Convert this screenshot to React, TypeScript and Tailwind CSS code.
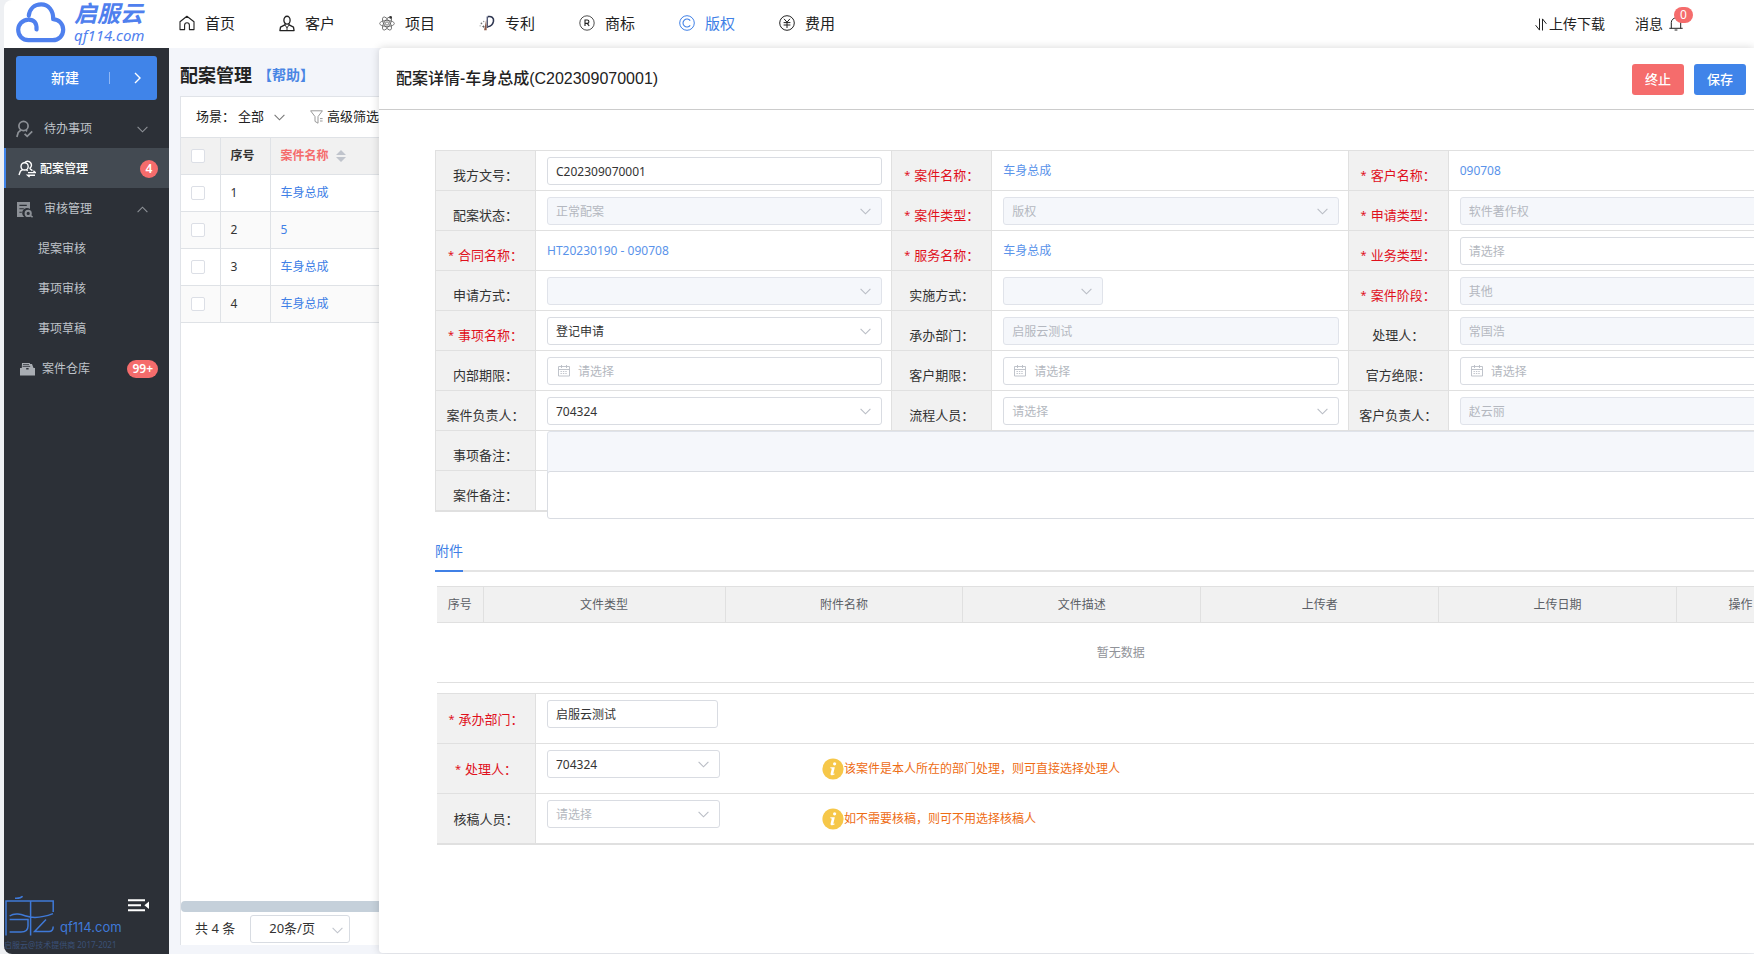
import React, { useId } from "react";

type IconProps = { className?: string };

function Chevron({ className = "" }: IconProps) {
  return (
    <svg className={className} width="11" height="7" viewBox="0 0 11 7" fill="none" stroke="currentColor" strokeWidth="1.1">
      <path d="M0.6 0.8 5.5 5.8 10.4 0.8" />
    </svg>
  );
}

function CalendarIcon({ className = "" }: IconProps) {
  return (
    <svg className={className} width="12" height="12" viewBox="0 0 12 12" fill="none" stroke="currentColor" strokeWidth="0.9">
      <path d="M.5 1.5h11V11H.5ZM0.5 4.5h11M3.5 0v3M8.5 0v3" />
      <path d="M2.5 6.5h7M2.5 8.5h7" strokeDasharray="1.4 1" />
    </svg>
  );
}

function HomeIcon() {
  return (
    <svg width="16" height="16" viewBox="0 0 16 16" fill="none" stroke="currentColor" strokeWidth="1.1" strokeLinejoin="round">
      <path d="M1 6.8 7.9 1.2 15 6.8V14.6H10.4V10.2A2.4 2.4 0 0 0 5.6 10.2V14.6H1Z" />
    </svg>
  );
}

function CustomerIcon() {
  return (
    <svg width="17" height="17" viewBox="0 0 17 17" fill="none" stroke="currentColor" strokeWidth="1.4" strokeLinejoin="round">
      <ellipse cx="8.5" cy="5" rx="3.3" ry="4.2" />
      <path d="M6.6 8.6 6.2 10 1.6 12.4 1 16H16L15.4 12.4 10.8 10 10.4 8.6" />
      <path d="m6.2 10 2.3 3 2.3-3M8.5 12v3.6" strokeWidth="1" />
    </svg>
  );
}

function ProjectIcon() {
  return (
    <svg width="17" height="17" viewBox="0 0 17 17" fill="none" stroke="#555" strokeWidth="0.8">
      <ellipse cx="8.5" cy="8.5" rx="7.8" ry="3.2" />
      <ellipse cx="8.5" cy="8.5" rx="7.8" ry="3.2" transform="rotate(60 8.5 8.5)" />
      <ellipse cx="8.5" cy="8.5" rx="7.8" ry="3.2" transform="rotate(120 8.5 8.5)" />
      <circle cx="8.5" cy="8.5" r="1.7" />
      <circle cx="12.4" cy="2" r="1.4" fill="#333" stroke="none" />
    </svg>
  );
}

function PatentIcon() {
  return (
    <svg width="17" height="17" viewBox="0 0 17 17" fill="none">
      <path d="M9.4 1.2C13.4.4 16 2.6 15.4 6 14.8 9 12.4 11.6 9.6 12" stroke="#2d3550" strokeWidth="1.7" />
      <path d="M8.8 1v12.4" stroke="#4a5270" strokeWidth="1.4" />
      <path d="M5.4 15.6 7.6 4.4 8.2 15.6Z" fill="#8a5a48" />
      <path d="m4.6 10 .5 1.3 1.3.4-1.3.5-.5 1.3-.5-1.3-1.3-.5 1.3-.4Z" fill="#555" />
      <circle cx="2.6" cy="8.4" r=".9" fill="#777" />
      <circle cx="5" cy="6.4" r=".8" fill="#999" />
      <circle cx="1.2" cy="11" r=".7" fill="#999" />
    </svg>
  );
}

function TrademarkIcon() {
  return (
    <svg width="16" height="16" viewBox="0 0 16 16" fill="none" stroke="currentColor">
      <circle cx="8" cy="8" r="7.2" strokeWidth="0.8" />
      <path d="M6 11V5h2.2a1.7 1.7 0 0 1 0 3.4H6M8.2 8.4 10.2 11" strokeWidth="1.1" />
    </svg>
  );
}

function CopyrightIcon() {
  return (
    <svg width="16" height="16" viewBox="0 0 16 16" fill="none" stroke="currentColor" strokeWidth="1">
      <circle cx="8" cy="8" r="7.3" />
      <path d="M11.2 5.6A4 4 0 1 0 11.2 10.4" strokeWidth="1.1" />
    </svg>
  );
}

function FeeIcon() {
  return (
    <svg width="16" height="16" viewBox="0 0 16 16" fill="none" stroke="currentColor" strokeWidth="1">
      <circle cx="8" cy="8" r="7.3" />
      <path d="M5 3.8 8 7.2l3-3.4M8 7.2V13M4.6 7.6h6.8M4.6 10h6.8" />
    </svg>
  );
}

function CloudLogo() {
  return (
    <svg width="50" height="41" viewBox="0 0 50 41" fill="none" stroke="#4f80ee" strokeWidth="4.2" strokeLinecap="round" strokeLinejoin="round">
      <path d="M20.5 27.5C21 20.5 17.6 17.6 12.6 17.6 6.4 17.6 2.2 22.6 2.2 27.8 2.2 33.8 6.6 38.2 12.4 38.2H36.6C42.8 38.2 47.2 33.6 47.2 27.8 47.2 21.8 43 17.6 37.2 17.2 37.4 8.4 32.4 2.4 25.2 2.4 18.4 2.4 13.6 6.8 12.8 13.6" />
    </svg>
  );
}

const navItems = [
  { label: "首页", icon: <HomeIcon /> },
  { label: "客户", icon: <CustomerIcon /> },
  { label: "项目", icon: <ProjectIcon /> },
  { label: "专利", icon: <PatentIcon /> },
  { label: "商标", icon: <TrademarkIcon /> },
  { label: "版权", icon: <CopyrightIcon />, active: true },
  { label: "费用", icon: <FeeIcon /> },
];

function Header() {
  return (
    <header className="flex h-12 shrink-0 items-center rounded-tl-lg bg-white">
      <a href="#" className="flex h-full w-[175px] shrink-0 items-start gap-2 pt-0.5 pl-3 text-[#4f80ee]">
        <CloudLogo />
        <span className="flex flex-col font-['Liberation_Sans','Noto_Sans_CJK_SC',sans-serif] whitespace-nowrap italic">
          <b className="text-[23px] leading-6">启服云</b>
          <span className="font-['Noto_Sans',sans-serif] text-[15px] leading-[18px]">qf114.com</span>
        </span>
      </a>
      <nav className="flex items-center gap-11 pb-0.5">
        {navItems.map((n) => (
          <a
            key={n.label}
            href="#"
            className={`flex w-14 items-center gap-2.5 text-[15px] leading-5 whitespace-nowrap ${n.active ? "text-[#4080e6]" : "text-[#222]"}`}
          >
            <span className="flex w-4 shrink-0 justify-center">{n.icon}</span>
            {n.label}
          </a>
        ))}
      </nav>
      <div className="ml-auto flex items-center gap-[30px] pr-[71px] text-sm leading-5 text-[#222]">
        <button type="button" className="flex items-center gap-0.5">
          <svg width="12" height="13" viewBox="0 0 12 13" fill="none" stroke="currentColor" strokeWidth="1">
            <path d="M4.5 0.5v11.6L0.6 7.2M7.5 12.5V.9l3.9 4.9" />
          </svg>
          上传下载
        </button>
        <button type="button" className="relative flex items-center gap-1.5">
          消息
          <svg width="14" height="14" viewBox="0 0 14 14" fill="none" stroke="currentColor" strokeWidth="1">
            <path d="M.3 11.3h13.4M2.3 11.3V5.6a4.7 4.7 0 0 1 9.4 0v5.7M5.6 13h2.8M7 .9V0" />
          </svg>
          <span className="absolute -top-[7px] -right-2.5 flex h-4 w-[19px] items-center justify-center rounded-full bg-[#f56c6c] text-xs leading-4 text-white">
            0
          </span>
        </button>
      </div>
    </header>
  );
}

function Badge({ children }: { children: React.ReactNode }) {
  return (
    <span className="ml-auto flex h-[18px] min-w-[18px] items-center justify-center rounded-full bg-[#f56c6c] px-[5px] text-xs font-semibold text-white">
      {children}
    </span>
  );
}

function Sidebar() {
  return (
    <aside className="flex w-[165px] shrink-0 flex-col rounded-bl-lg bg-[#2c3037] text-xs text-[#bfc3c9]">
      <button type="button" className="mx-3 mt-2 mb-2 flex h-11 items-center rounded-[3px] bg-[#4084e9] text-sm font-medium text-white">
        <span className="pl-[35px]">新建</span>
        <span className="ml-[30px] h-3 w-px bg-[#8fb7f5]" />
        <svg className="ml-6" width="8" height="12" viewBox="0 0 8 12" fill="none" stroke="currentColor" strokeWidth="1.4">
          <path d="m1 1 5 5-5 5" />
        </svg>
      </button>
      <nav className="flex flex-col">
        <a href="#" className="flex h-10 items-center pt-0.5 pr-[21px] pl-3">
          <svg width="18" height="18" viewBox="0 0 18 18" fill="none" stroke="#8d9197" strokeWidth="1.7">
            <circle cx="7.5" cy="6" r="4.6" />
            <path d="M5 10 2.2 12.4.9 17M10 10.2l1 1.2M8.6 13.8l2.6 2.6 5-5" />
          </svg>
          <span className="ml-2.5">待办事项</span>
          <Chevron className="ml-auto text-[#8d9197]" />
        </a>
        <a href="#" className="flex h-10 items-center border-l-2 border-[#4084e9] bg-[#434a52] pt-0.5 pr-[11px] pl-3 font-medium text-white">
          <svg width="18" height="18" viewBox="0 0 18 18" fill="none" stroke="currentColor" strokeWidth="1.4">
            <circle cx="6.6" cy="6.4" r="3.6" />
            <path d="M4.8 9.4 2.4 11.2 1 15M8.4 9.4l1.2 1.6M6.6 2.6A3.9 3.9 0 1 1 11.4 8.6M12 8.8l2.4 1.8M10 12.6h7.4l-2-1.8M17 15.2H9.6l2 1.8" />
          </svg>
          <span className="ml-1">配案管理</span>
          <Badge>4</Badge>
        </a>
        <a href="#" className="flex h-10 items-center pt-0.5 pr-[21px] pl-3">
          <svg width="18" height="17" viewBox="0 0 18 17" fill="none">
            <path d="M1 1h13v7a4.8 4.8 0 0 0-5.8 8H1Z" fill="#8d9197" />
            <path d="M3.4 4.4h7.4M3.4 7.8h4.4M3.4 11.2h2.4" stroke="#2c3037" strokeWidth="1.1" />
            <circle cx="12.2" cy="12.4" r="2.6" stroke="#8d9197" strokeWidth="2" />
            <path d="m14.2 14.4 2.4 1.8" stroke="#8d9197" strokeWidth="1.6" />
          </svg>
          <span className="ml-2.5">审核管理</span>
          <Chevron className="ml-auto rotate-180 text-[#8d9197]" />
        </a>
        {["提案审核", "事项审核", "事项草稿"].map((t) => (
          <a key={t} href="#" className="flex h-10 items-center pt-0.5 pl-[34px]">
            {t}
          </a>
        ))}
        <a href="#" className="flex h-10 items-center pt-0.5 pr-[11px] pl-4">
          <svg width="15" height="14" viewBox="0 0 15 14" fill="#a9adb3">
            <path d="M2 1h7.6l.6 1H12l1.5 4H1.8Z" />
            <path d="M0 6h6.2v1.6h2.4V6H15v7.4H0Z" />
            <path d="M3 2.6h6M2.6 4.4h7.6" stroke="#2c3037" strokeWidth=".8" />
          </svg>
          <span className="ml-[7px]">案件仓库</span>
          <Badge>99+</Badge>
        </a>
      </nav>
      <div className="mt-auto pb-px">
        <div className="flex items-start">
          <svg className="shrink-0" width="50" height="42" viewBox="0 0 50 42" fill="none" stroke="#3f79d8" strokeWidth="1.5">
            <path d="M11 3.2C14 3.4 17 3 18.6 1.2M2 40.4V6H49.2V17M26.6 6v34.4M5.6 21C11 17.4 17 19.4 22 21 31 24 40 22 49 18.6" />
            <path d="M5.6 24.6H24V31C24 35 21 37 17 37H5.6M42 24.6 30.6 36.6H45C48 36.6 49.2 35 49.2 31.6" />
          </svg>
          <div className="flex flex-1 flex-col">
            <button type="button" aria-label="收起菜单" className="mr-[19px] ml-auto text-white">
              <svg className="block" width="23" height="20" viewBox="0 0 23 20">
                <path d="M1 5.2h17M1 10.2h13M1 15.2h17" stroke="currentColor" strokeWidth="2" />
                <path d="M22 6.4v7.6l-4.6-3.8Z" fill="currentColor" />
              </svg>
            </button>
            <span className="mt-0.5 pl-1.5 font-['Inter','Liberation_Sans',sans-serif] text-[13px] leading-5 text-[#3f79d8]">qf114.com</span>
          </div>
        </div>
        <p className="text-[8px] leading-4 whitespace-nowrap text-[#3b5078]">启服云@技术提供商 2017-2021</p>
      </div>
    </aside>
  );
}

const checkbox =
  "block size-3.5 appearance-none rounded-[2px] border border-[#dcdfe6] bg-white";
const listRows = ["车身总成", "5", "车身总成", "车身总成"];

function CaseList() {
  return (
    <section className="flex w-[210px] shrink-0 flex-col overflow-hidden pt-[15px] pb-[9px] pl-[11px]">
      <h1 className="flex h-6 items-center gap-1.5 text-lg leading-6 font-bold whitespace-nowrap text-[#222]">
        配案管理
        <a href="#" className="text-sm text-[#4a86e4]">【帮助】</a>
      </h1>
      <div className="mt-[9px] flex flex-1 flex-col border-t border-l border-[#e0e3e8] bg-white">
        <div className="flex h-10 items-center pl-[15px] text-[13px] whitespace-nowrap text-[#222]">
          <span>场景：</span>
          <button type="button" className="ml-[3px] flex items-center gap-2.5">
            全部
            <Chevron className="text-[#777]" />
          </button>
          <button type="button" className="ml-[25px] flex items-center gap-1">
            <svg width="13" height="14" viewBox="0 0 13 14" fill="none" stroke="#999" strokeWidth="1">
              <path d="M.6.8h11.8L8 6.6v6.6l-3-1.8V6.6Z" />
              <path d="M10 8.6h2.6M10 11h2.6" />
            </svg>
            高级筛选
          </button>
        </div>
        <table className="w-full table-fixed border-collapse text-left text-xs text-[#333]">
          <thead>
            <tr className="h-[37px] border-y border-[#dfe2e6] bg-[#f1f1f1]">
              <th className="w-[39px] border-r border-[#dfe2e6] pl-2.5">
                <input type="checkbox" aria-label="全选" className={checkbox} />
              </th>
              <th className="w-[50px] border-r border-[#dfe2e6] pl-2.5 font-semibold">序号</th>
              <th className="pl-2.5 font-semibold text-[#f56c6c]">
                <span className="flex items-center gap-[7px]">
                  案件名称
                  <svg width="10" height="12" viewBox="0 0 10 12" fill="#c0c4cc">
                    <path d="M0 5 5 0l5 5ZM0 7l5 5 5-5Z" />
                  </svg>
                </span>
              </th>
            </tr>
          </thead>
          <tbody>
            {listRows.map((name, i) => (
              <tr key={i} className="h-[37px] border-b border-[#dfe2e6] even:bg-[#fafafa]">
                <td className="border-r border-[#dfe2e6] pl-2.5">
                  <input type="checkbox" aria-label={`选择第${i + 1}行`} className={checkbox} />
                </td>
                <td className="border-r border-[#dfe2e6] pl-2.5">{i + 1}</td>
                <td className="pl-2.5">
                  <a href="#" className="text-[#4080e6]">{name}</a>
                </td>
              </tr>
            ))}
          </tbody>
        </table>
        <div className="mt-auto h-[11px] rounded-l-sm bg-[#c5d0da]" />
        <div className="flex h-[33px] items-center pl-3.5 text-[13px] whitespace-nowrap text-[#333]">
          <span>共 4 条</span>
          <div className="relative ml-[15px] w-[100px] shrink-0">
            <select aria-label="每页条数" className="block h-7 w-full appearance-none rounded-[3px] border border-[#d8dce2] bg-white pl-[18px]">
              <option>20条/页</option>
            </select>
            <Chevron className="pointer-events-none absolute top-3 right-[7px] text-[#c0c4cc]" />
          </div>
        </div>
      </div>
    </section>
  );
}

type FieldDef = {
  label: string;
  required?: boolean;
  kind: "input" | "select" | "date" | "link";
  value?: string;
  placeholder?: string;
  disabled?: boolean;
  width?: string;
};

const fieldRows: FieldDef[][] = [
  [
    { label: "我方文号", kind: "input", value: "C202309070001" },
    { label: "案件名称", required: true, kind: "link", value: "车身总成" },
    { label: "客户名称", required: true, kind: "link", value: "090708" },
  ],
  [
    { label: "配案状态", kind: "select", value: "正常配案", disabled: true },
    { label: "案件类型", required: true, kind: "select", value: "版权", disabled: true },
    { label: "申请类型", required: true, kind: "select", value: "软件著作权", disabled: true },
  ],
  [
    { label: "合同名称", required: true, kind: "link", value: "HT20230190 - 090708" },
    { label: "服务名称", required: true, kind: "link", value: "车身总成" },
    { label: "业务类型", required: true, kind: "select", placeholder: "请选择" },
  ],
  [
    { label: "申请方式", kind: "select", value: "", disabled: true },
    { label: "实施方式", kind: "select", value: "", disabled: true, width: "w-[100px]" },
    { label: "案件阶段", required: true, kind: "select", value: "其他", disabled: true },
  ],
  [
    { label: "事项名称", required: true, kind: "select", value: "登记申请" },
    { label: "承办部门", kind: "input", value: "启服云测试", disabled: true },
    { label: "处理人", kind: "input", value: "常国浩", disabled: true },
  ],
  [
    { label: "内部期限", kind: "date", placeholder: "请选择" },
    { label: "客户期限", kind: "date", placeholder: "请选择" },
    { label: "官方绝限", kind: "date", placeholder: "请选择" },
  ],
  [
    { label: "案件负责人", kind: "select", value: "704324" },
    { label: "流程人员", kind: "select", placeholder: "请选择" },
    { label: "客户负责人", kind: "input", value: "赵云丽", disabled: true },
  ],
];

function Label({ id, text, required, className = "pt-2" }: { id?: string; text: string; required?: boolean; className?: string }) {
  return (
    <label
      htmlFor={id}
      className={`flex items-center justify-center gap-1 border-r border-[#e0e0e0] bg-[#f1f1f1] text-[13px] leading-5 whitespace-nowrap ${className} ${required ? "text-[#e0101c]" : "text-[#333]"}`}
    >
      {required && <span className="text-[11px]">*</span>}
      <span>{text}：</span>
    </label>
  );
}

function Control({ id, f }: { id: string; f: FieldDef }) {
  if (f.kind === "link") {
    return (
      <a id={id} href="#" className="block leading-7 text-[#5a93ea]">
        {f.value}
      </a>
    );
  }
  const muted = f.disabled || f.placeholder !== undefined;
  const box = `block h-7 w-full appearance-none rounded-[3px] border pl-2 text-xs ${
    f.disabled ? "border-[#e0e3ea] bg-[#f5f7fb]" : "border-[#d9dce2] bg-white"
  } ${muted ? "text-[#b4b8c0]" : "text-[#333]"} placeholder:text-[#b4b8c0]`;
  if (f.kind === "select") {
    return (
      <div className={`relative ${f.width ?? "w-full"}`}>
        <select id={id} disabled={f.disabled} className={`${box} pt-0.5 opacity-100`}>
          <option>{f.value ?? f.placeholder}</option>
        </select>
        <Chevron className="pointer-events-none absolute top-[11px] right-[11px] text-[#b9bdc5]" />
      </div>
    );
  }
  if (f.kind === "date") {
    return (
      <div className="relative w-full">
        <input id={id} type="text" placeholder={f.placeholder} className={`${box} pl-[30px]`} />
        <CalendarIcon className="pointer-events-none absolute top-2 left-[11px] text-[#b9bdc5]" />
      </div>
    );
  }
  return (
    <div className={f.width ?? "w-full"}>
      <input id={id} type="text" defaultValue={f.value} disabled={f.disabled} className={box} />
    </div>
  );
}

function Field({ f }: { f: FieldDef }) {
  const id = useId();
  return (
    <>
      <Label id={id} text={f.label} required={f.required} />
      <div className="border-r border-[#e0e0e0] pt-1.5 pr-[9px] pl-[11px] text-xs">
        <Control id={id} f={f} />
      </div>
    </>
  );
}

const assignRows: { f: FieldDef; hint?: string }[] = [
  { f: { label: "承办部门", required: true, kind: "input", value: "启服云测试", width: "w-[171px]" } },
  {
    f: { label: "处理人", required: true, kind: "select", value: "704324", width: "w-[173px]" },
    hint: "该案件是本人所在的部门处理，则可直接选择处理人",
  },
  {
    f: { label: "核稿人员", kind: "select", placeholder: "请选择", width: "w-[173px]" },
    hint: "如不需要核稿，则可不用选择核稿人",
  },
];

function AssignRow({ f, hint }: { f: FieldDef; hint?: string }) {
  const id = useId();
  return (
    <div className="grid h-[50px] grid-cols-[99px_276px_1fr] border-t border-[#e0e0e0] text-xs">
      <Label id={id} text={f.label} required={f.required} className="" />
      <div className="pt-1.5 pr-[9px] pl-[11px]">
        <Control id={id} f={f} />
      </div>
      {hint && (
        <p className="flex items-center pl-2.5 text-[#ee6c14]">
          <svg width="22" height="22" viewBox="0 0 22 22">
            <circle cx="11" cy="11" r="10.6" fill="#f6c749" />
            <circle cx="12.6" cy="5.8" r="1.6" fill="#fff" />
            <path d="M8.4 9.2h4.4l-1.4 6c-.2.8.4.8 1.4.2l-.3 1.1c-2.4 1.4-4.4.9-3.9-1l1.1-4.6c.1-.5-.4-.7-1.5-.7Z" fill="#fff" />
          </svg>
          {hint}
        </p>
      )}
    </div>
  );
}

const fileColumns = [
  { t: "序号", w: "w-[46px]" },
  { t: "文件类型", w: "w-[242px]" },
  { t: "附件名称", w: "" },
  { t: "文件描述", w: "" },
  { t: "上传者", w: "" },
  { t: "上传日期", w: "" },
  { t: "操作", w: "w-32" },
];

function Drawer() {
  return (
    <main className="mb-px flex min-w-0 flex-1 flex-col overflow-hidden rounded-l-[4px] bg-white shadow-[0_0_8px_rgba(0,0,0,0.16)]">
      <div className="flex h-[62px] shrink-0 items-center border-b border-[#ccc] pr-2 pl-[17px]">
        <h2 className="text-base leading-6 font-medium text-[#222]">
          配案详情-车身总成<span className="font-['Liberation_Sans',sans-serif] font-normal">(C202309070001)</span>
        </h2>
        <div className="ml-auto flex gap-2.5 pt-0.5 text-[13px] font-medium text-white">
          <button type="button" className="h-[31px] w-[52px] rounded-[3px] bg-[#f56c6c]">终止</button>
          <button type="button" className="h-[31px] w-[52px] rounded-[3px] bg-[#4084e9]">保存</button>
        </div>
      </div>
      <form className="mt-10 ml-14 w-[calc(100%-5px)]">
        <div className="border-l border-[#e0e0e0]">
          {fieldRows.map((row, i) => (
            <div key={i} className="grid h-10 grid-cols-[100px_1fr_100px_1fr_100px_1fr] border-t border-[#e0e0e0]">
              {row.map((f) => (
                <Field key={f.label} f={f} />
              ))}
            </div>
          ))}
          <div className="grid h-10 grid-cols-[100px_1fr] grid-rows-[39px] border-t border-[#e0e0e0]">
            <Label id="item-note" text="事项备注" />
            <div className="pl-[11px]">
              <textarea id="item-note" disabled className="block h-12 w-full resize-none rounded-[3px] border border-[#dfe3ea] bg-[#f5f7fb]" />
            </div>
          </div>
          <div className="grid h-[42px] grid-cols-[100px_1fr] grid-rows-[39px] border-t border-b-2 border-[#e0e0e0]">
            <Label id="case-note" text="案件备注" />
            <div className="pl-[11px]">
              <textarea id="case-note" className="block h-12 w-full resize-none rounded-[3px] border border-[#d9dce2] bg-white" />
            </div>
          </div>
        </div>

        <div className="mt-5 flex h-10 border-b-2 border-[#e4e4e4]">
          <button type="button" className="-mb-0.5 border-b-2 border-[#4080e6] text-sm text-[#4080e6]">附件</button>
        </div>

        <div className="ml-0.5">
          <table className="mt-3.5 w-full table-fixed border-collapse text-xs">
            <thead>
              <tr className="h-9 border-y border-[#e0e0e0] bg-[#f1f1f1] text-[#5c5f66]">
                {fileColumns.map((c) => (
                  <th key={c.t} className={`border-r border-[#e0e0e0] font-normal ${c.w}`}>
                    {c.t}
                  </th>
                ))}
              </tr>
            </thead>
            <tbody>
              <tr className="h-[60px] border-b border-[#e0e0e0]">
                <td colSpan={7} className="text-center text-[#909399]">暂无数据</td>
              </tr>
            </tbody>
          </table>
          <div className="mt-2.5 border-b-2 border-[#e0e0e0]">
            {assignRows.map((r) => (
              <AssignRow key={r.f.label} f={r.f} hint={r.hint} />
            ))}
          </div>
        </div>
      </form>
    </main>
  );
}

export default function App() {
  return (
    <div className="flex min-h-screen flex-col bg-[#eef0f3] pl-1 font-['Noto_Sans','Noto_Sans_CJK_SC',sans-serif]">
      <Header />
      <div className="flex flex-1 rounded-bl-lg bg-[#f3f5fa]">
        <Sidebar />
        <CaseList />
        <Drawer />
      </div>
    </div>
  );
}
